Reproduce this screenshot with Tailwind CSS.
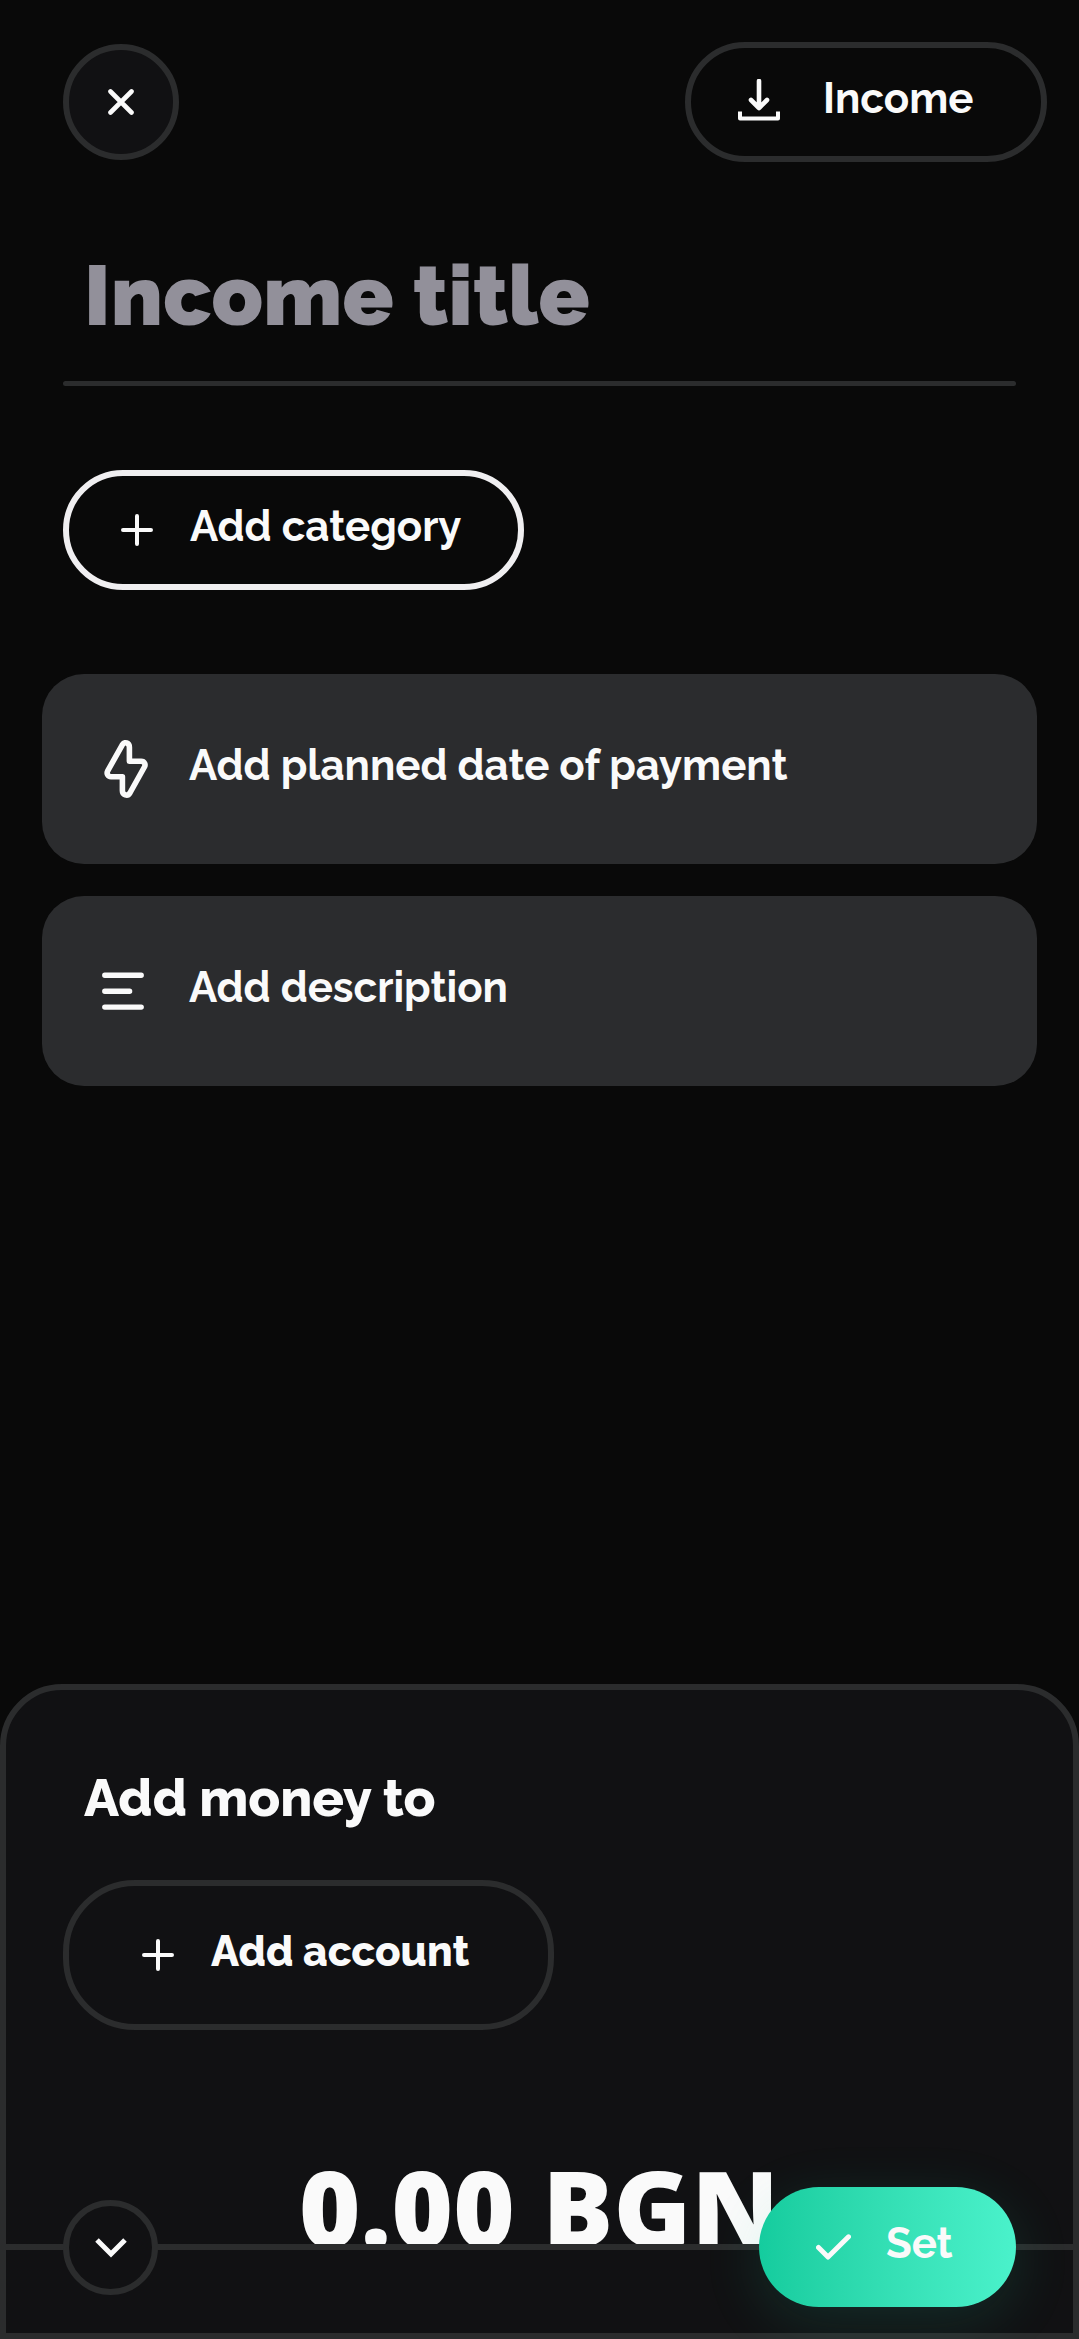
<!DOCTYPE html>
<html lang="en">
<head>
<meta charset="utf-8">
<meta name="viewport" content="width=device-width, initial-scale=1">
<title>Income</title>
<script src="https://cdn.jsdelivr.net/npm/@tailwindcss/browser@4"></script>
</head>
<body class="bg-[#090909]">
<main class="flex h-[2339px] w-[1079px] flex-col overflow-hidden bg-[#090909] font-['Raleway','Lato',sans-serif] text-[42px] leading-none font-bold tracking-[-0.04px] whitespace-nowrap text-[#fafafa]">

  <header class="flex items-center justify-between pt-[42px] pr-8 pl-[63px]">
    <button class="flex size-[116px] items-center justify-center rounded-full border-6 border-[#2b2c2d] bg-[#111113]" aria-label="Close">
      <svg class="size-[26px]" viewBox="0 0 26 26" fill="none" stroke="currentColor" stroke-width="4.6" stroke-linecap="round"><path d="M2.5 2.5l21 21M23.5 2.5l-21 21"/></svg>
    </button>
    <button class="flex h-[120px] w-[362px] items-center rounded-full border-6 border-[#2b2c2d] pl-[47px]">
      <svg class="mt-[-4px] h-[42px] w-[42px]" viewBox="0 0 42 42" fill="none" stroke="currentColor" stroke-width="4.6" stroke-linecap="round" stroke-linejoin="round"><path d="M21 2v27M13 21l8 8 8-8"/><path stroke-width="4" stroke-linecap="butt" d="M2 32.500v7h38v-7"/></svg>
      <span class="pb-[6px] pl-[43px]">Income</span>
    </button>
  </header>

  <h1 class="mt-[92px] pl-[84px] text-[84px] font-black tracking-[0.2px] text-[#92909a]">Income title</h1>
  <div class="mx-[63px] mt-[43px] h-[5px] shrink-0 rounded-full bg-[#2b2c2d]"></div>

  <button class="mt-[84px] ml-[63px] flex h-[120px] w-[461px] shrink-0 items-center rounded-full border-6 border-[#f0eff1] pl-[52px]">
    <svg class="size-8" viewBox="0 0 32 32" fill="none" stroke="currentColor" stroke-width="4" stroke-linecap="round"><path d="M16 2v28M2 16h28"/></svg>
    <span class="pb-[6px] pl-[37px]">Add category</span>
  </button>

  <section class="mt-[84px] flex flex-col gap-8 px-[42px]">
    <button class="flex h-[190px] w-full items-center rounded-[42px] bg-[#2b2c2e] pl-[62px]">
      <svg class="h-[58px] w-[44px]" viewBox="0 0 44 58" fill="none" stroke="currentColor" stroke-width="5.6" stroke-linejoin="round"><path d="M18.300 4.800C20.600 1.200 25.400 2.800 25.400 7.200V21.300H37.200C40.500 21.300 41.900 24.600 40.400 27L25.900 53C23.600 56.800 18.400 55 18.400 50.700V36.700H7C3.700 36.700 2.300 33.400 3.700 30.900Z"/></svg>
      <span class="pb-[6px] pl-[41px]">Add planned date of payment</span>
    </button>
    <button class="flex h-[190px] w-full items-center rounded-[42px] bg-[#2b2c2e] pl-[60px]">
      <svg class="h-[38px] w-[42px]" viewBox="0 0 42 38" fill="none" stroke="currentColor" stroke-width="5.4" stroke-linecap="round"><path d="M2.800 3.300h36.400M2.800 19.300h24.800M2.800 35.100h36.400"/></svg>
      <span class="pb-[6px] pl-[45px]">Add description</span>
    </button>
  </section>

  <section class="mt-auto flex h-[655px] shrink-0 flex-col rounded-t-[62px] border-6 border-[#2b2c2d] bg-[#111113]">
    <h2 class="mt-[82px] h-[53px] pl-[78px] text-[52.5px] font-extrabold">Add money to</h2>
    <button class="mt-[55px] ml-[57px] flex h-[150px] w-[491px] shrink-0 items-center rounded-[72px] border-6 border-[#2b2c2d] pl-[73px]">
      <svg class="size-8" viewBox="0 0 32 32" fill="none" stroke="currentColor" stroke-width="4" stroke-linecap="round"><path d="M16 2v28M2 16h28"/></svg>
      <span class="pb-[6px] pl-[37px] font-extrabold">Add account</span>
    </button>
    <div class="flex h-[214px] shrink-0 items-start overflow-hidden pt-[124px] pl-[293px] font-['Open_Sans',sans-serif] text-[105px] font-extrabold tracking-[0.25px]">0.00 BGN</div>
    <div class="relative flex h-[89px] shrink-0 items-start justify-between border-t-6 border-[#2b2c2d] px-[57px]">
      <button class="mt-[-50px] flex size-[95px] items-center justify-center rounded-full border-6 border-[#2b2c2d] bg-[#111113]" aria-label="Collapse">
        <svg class="h-5 w-8" viewBox="0 0 32 20" fill="none" stroke="currentColor" stroke-width="5"><path d="M2 2l14 14L30 2"/></svg>
      </button>
      <button class="mt-[-63px] flex h-[120px] w-[257px] items-center rounded-full bg-linear-to-r from-[#14cc9e] to-[#4af2cb] pl-[57px] shadow-[0_14px_60px_rgba(32,216,170,0.14)]">
        <svg class="h-[26px] w-[35px]" viewBox="0 0 35 26" fill="none" stroke="currentColor" stroke-width="5" stroke-linecap="round" stroke-linejoin="round"><path d="M2.500 13.500l9.500 9.500L32.500 2.800"/></svg>
        <span class="pb-[6px] pl-[35px]">Set</span>
      </button>
    </div>
  </section>
</main>
</body>
</html>
